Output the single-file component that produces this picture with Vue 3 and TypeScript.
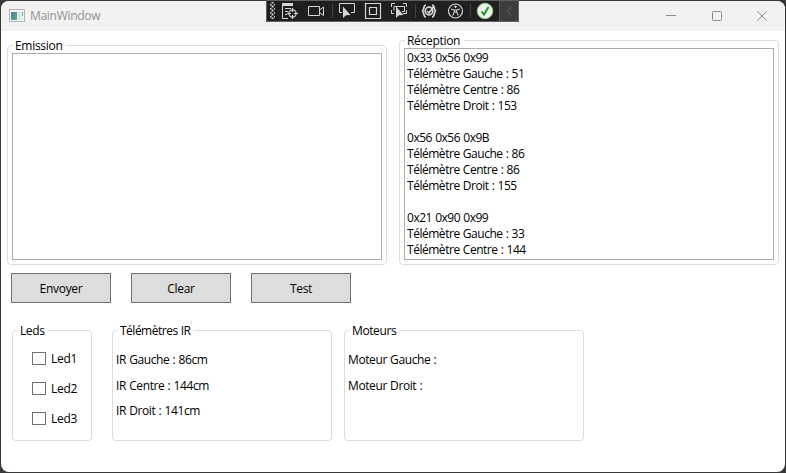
<script setup lang="ts">
import { ref } from 'vue'

interface Led { name: string; on: boolean }

const emission = ref('')
const reception: string[] = [
  '0x33 0x56 0x99',
  'Télémètre Gauche : 51',
  'Télémètre Centre : 86',
  'Télémètre Droit : 153',
  '',
  '0x56 0x56 0x9B',
  'Télémètre Gauche : 86',
  'Télémètre Centre : 86',
  'Télémètre Droit : 155',
  '',
  '0x21 0x90 0x99',
  'Télémètre Gauche : 33',
  'Télémètre Centre : 144',
]
const leds = ref<Led[]>([
  { name: 'Led1', on: false },
  { name: 'Led2', on: false },
  { name: 'Led3', on: false },
])
const telemetres: string[] = ['IR Gauche : 86cm', 'IR Centre : 144cm', 'IR Droit : 141cm']
const moteurs: string[] = ['Moteur Gauche :', 'Moteur Droit :']
</script>

<template>
  <div class="desktop">
    <div class="window">
      <header class="titlebar">
        <svg class="app-icon" width="16" height="14" viewBox="0 0 16 14">
          <defs>
            <linearGradient id="pane" x1="0" y1="0" x2="1" y2="1">
              <stop offset="0" stop-color="#5277a0" />
              <stop offset="1" stop-color="#59b284" />
            </linearGradient>
          </defs>
          <rect x=".5" y=".5" width="15" height="12" fill="#f1f3f3" stroke="#b0b5ba" />
          <rect x="2" y="3" width="6" height="8" fill="url(#pane)" />
          <rect x="9" y="3" width="3" height="8" fill="#dde2e4" />
          <rect x="13" y="3" width="1" height="4" fill="#78a2ad" />
        </svg>
        <span class="title">MainWindow</span>
        <div class="controls">
          <svg width="10" height="10" viewBox="0 0 10 10"><path d="M0 4.5H10" /></svg>
          <svg width="10" height="10" viewBox="0 0 10 10"><rect x=".5" y=".5" width="9" height="9" rx="1" /></svg>
          <svg width="10" height="10" viewBox="0 0 10 10"><path d="M.3 .3L9.7 9.7M9.7 .3L.3 9.7" /></svg>
        </div>
      </header>

      <main>
        <section class="consoles">
          <fieldset class="console emission">
            <legend>Emission</legend>
            <textarea v-model="emission" class="box" spellcheck="false"></textarea>
          </fieldset>
          <fieldset class="console reception">
            <legend>Réception</legend>
            <div class="box log">
              <p v-for="(line, i) in reception" :key="i">{{ line }}</p>
            </div>
          </fieldset>
        </section>

        <section class="buttons">
          <button>Envoyer</button>
          <button>Clear</button>
          <button>Test</button>
        </section>

        <section class="panels">
          <fieldset class="leds">
            <legend>Leds</legend>
            <label v-for="led in leds" :key="led.name">
              <input v-model="led.on" type="checkbox" /><span>{{ led.name }}</span>
            </label>
          </fieldset>
          <fieldset class="telemetres">
            <legend>Télémètres IR</legend>
            <p v-for="t in telemetres" :key="t">{{ t }}</p>
          </fieldset>
          <fieldset class="moteurs">
            <legend>Moteurs</legend>
            <p v-for="m in moteurs" :key="m">{{ m }}</p>
          </fieldset>
        </section>
      </main>
    </div>

    <div class="debugbar">
      <svg width="253" height="22" viewBox="0 0 253 22" fill="none" stroke="#d6d6d6">
        <defs>
          <pattern id="grip" width="4" height="4" patternUnits="userSpaceOnUse">
            <rect width="1" height="1" fill="#505050" />
            <rect x="2" y="2" width="1" height="1" fill="#505050" />
          </pattern>
        </defs>
        <rect x="4" y="2" width="5" height="17" fill="url(#grip)" stroke="none" />
        <path d="M16 3H27V6H16Z" fill="#d6d6d6" stroke="none" />
        <path d="M16.5 6V18.5H22M19 8.5H25M19 11.5H22M19 14.5H21" />
        <circle cx="26.5" cy="13.5" r="3.6" stroke-width="1.2" />
        <path d="M26.5 8V12M26.5 15V19M21 13.5H25M28 13.5H32" stroke-width="1.2" />
        <path d="M42.5 6.5H53.5V15.5H42.5ZM53.5 10L57.5 7V15.5L53.5 12.5" />
        <path d="M66.5 4V18M149.5 4V18M204.5 4V18" stroke="#424242" />
        <path d="M76 12.5H73.5V3.5H88.5V12.5H85" />
        <path d="M77 6.5V18L80 15.2L84.5 15Z" fill="#d6d6d6" stroke="none" />
        <path d="M99.5 3.5H114.5V18.5H99.5ZM103.5 7.5H110.5V14.5H103.5Z" stroke-width="1.2" />
        <path d="M125.5 7V3.5H129M137 3.5H140.5V7M140.5 10V13.5H137M125.5 10V13.5H128M128 10.5V6.5H138.5V11.5H136" />
        <path d="M130 6.5V18L133 15.2L137.5 15Z" fill="#d6d6d6" stroke="none" />
        <g stroke-width="1.7">
          <path d="M160 5C157 5 158.5 9 156.5 11C158.5 13 157 17 160 17M166 5C169 5 167.5 9 169.5 11C167.5 13 169 17 166 17" />
          <circle cx="163" cy="11" r="3.8" />
          <path d="M161 11L163 13L168 6" />
        </g>
        <circle cx="189.5" cy="11" r="7" stroke-width="1.2" />
        <circle cx="189.5" cy="6.8" r="1.2" fill="#d6d6d6" stroke="none" />
        <path d="M185 9L188 10H191L194 9M188.3 10V12L186.8 15.5M190.7 10V12L192.2 15.5M188.3 12H190.7" stroke-width="1.1" />
        <circle cx="219" cy="11" r="7.8" fill="#e8f2e8" stroke="#88bf88" />
        <path d="M215.5 11.5L218 14.5L222.5 7" stroke="#258c2b" stroke-width="1.9" />
        <rect x="233" y="0" width="20" height="22" fill="#3d3d3d" stroke="none" />
        <path d="M233.5 0V22" stroke="#555" />
        <path d="M245.5 7L241 11L245.5 15" stroke="#666" />
        <path d="M.5 0V21.5H252.5V0M0 .5H253" stroke="#606060" />
      </svg>
    </div>
  </div>
</template>

<style>
html, body { margin: 0; overflow: hidden; }
</style>

<style scoped>
.desktop {
  position: relative;
  box-sizing: border-box;
  width: 786px;
  height: 473px;
  padding: 1px;
  background: #38373a;
  font: 12px/16px "Open Sans", "Noto Sans", sans-serif;
  letter-spacing: -0.3px;
  color: #000;
}
.window {
  height: 471px;
  border-radius: 8px;
  overflow: hidden;
  background: #fff;
}
.titlebar {
  display: flex;
  align-items: center;
  box-sizing: border-box;
  height: 30px;
  padding: 0 18px 0 8px;
  background: #f2f2f2;
  color: #929292;
}
.title { margin-left: 5px; }
.controls { display: flex; gap: 36px; margin-left: auto; }
.controls svg { fill: none; stroke: #8c8c8c; }
.controls svg + svg + svg { margin-left: -1px; }
.consoles {
  display: flex;
  align-items: flex-end;
  gap: 12px;
  padding: 1px 6px 0;
}
fieldset {
  box-sizing: border-box;
  min-width: 0;
  margin: 0;
  padding: 0;
  border: 1px solid #d5dfe5;
  border-radius: 4px;
}
legend {
  height: 17px;
  margin-left: 5px;
  padding: 0 4px 0 2px;
  line-height: 17px;
}
.console { display: flex; flex-direction: column; width: 380px; padding: 0 4px 4px; }
.console legend { margin-left: 1px; }
.emission { height: 228px; }
.reception { height: 233px; }
.box {
  box-sizing: border-box;
  display: block;
  width: 370px;
  height: 207px;
  margin: -1px 0 0;
  padding: 1px 2px;
  border: 1px solid #abadb3;
  outline: none;
  resize: none;
  overflow: hidden;
  font: inherit;
}
.log {
  height: 212px;
  padding-top: 1.4px;
  line-height: 15.96px;
  letter-spacing: -0.47px;
  word-spacing: 0.5px;
}
p { margin: 0; white-space: pre; }
.log p { height: 15.96px; }
.buttons { display: flex; gap: 20px; padding: 8px 10px 0; }
button {
  box-sizing: border-box;
  width: 100px;
  height: 30px;
  padding: 2px 0 0;
  border: 1px solid #707070;
  border-radius: 0;
  background: #ddd;
  font: inherit;
  letter-spacing: inherit;
  color: inherit;
}
.panels {
  display: flex;
  padding: 19px 11px 0;
  letter-spacing: -0.4px;
  word-spacing: 0.5px;
}
.panels fieldset { height: 119px; }
.leds { width: 80px; }
.telemetres { width: 220px; margin-left: 20px; }
.telemetres legend { letter-spacing: -0.5px; }
.moteurs { width: 240px; margin-left: 12px; }
label { display: flex; align-items: center; height: 30px; padding-left: 19px; letter-spacing: -0.3px; }
label span { padding-top: 2px; }
.leds legend + label { margin-top: 4px; }
input {
  appearance: none;
  box-sizing: border-box;
  width: 14px;
  height: 13px;
  margin: 0 5px 0 0;
  border: 1px solid #707070;
  background: #fff;
}
.panels p { height: 25.5px; padding-left: 3px; line-height: 25.5px; }
.panels legend + p { margin-top: 8px; }
.debugbar { position: absolute; left: 266px; top: 0; width: 253px; height: 22px; background: #1f1f1f; }
.debugbar svg { display: block; }
</style>
